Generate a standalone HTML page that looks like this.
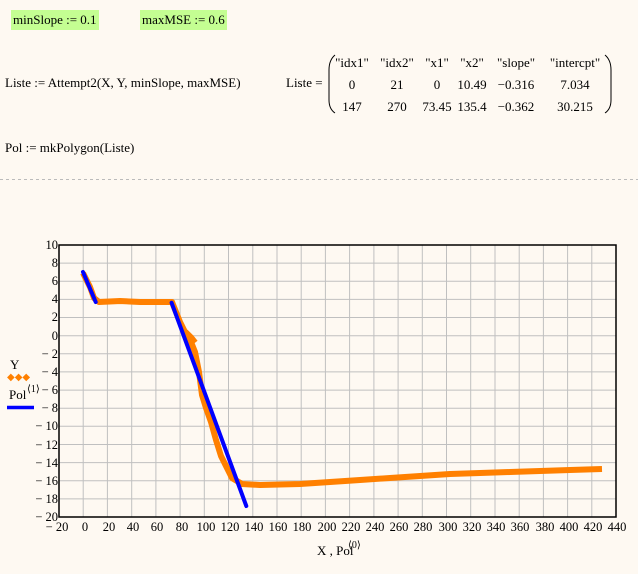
<!DOCTYPE html><html><head><meta charset="utf-8"><style>
body{margin:0;width:638px;height:574px;background:#fef9f2;font-family:"Liberation Serif",serif;font-size:13px;color:#000;position:relative;overflow:hidden}
.a{position:absolute;white-space:nowrap}
.g{background:#c4fe92;padding:2px 2px}
svg{position:absolute;left:0;top:0}
</style></head><body>
<div class="a g" style="left:11px;top:10px">minSlope := 0.1</div>
<div class="a g" style="left:140px;top:10px">maxMSE := 0.6</div>
<div class="a" style="left:5px;top:75px">Liste := Attempt2(X, Y, minSlope, maxMSE)</div>
<div class="a" style="left:286px;top:75px">Liste =</div>
<div class="a" style="left:5px;top:140px">Pol := mkPolygon(Liste)</div>
<svg width="638" height="574" font-family="Liberation Serif" font-size="12.5">
<g text-anchor="middle" font-size="13">
<text x="352" y="67">"idx1"</text><text x="397" y="67">"idx2"</text><text x="437" y="67">"x1"</text><text x="472" y="67">"x2"</text><text x="516" y="67">"slope"</text><text x="575" y="67">"intercpt"</text>
<text x="352" y="89">0</text><text x="397" y="89">21</text><text x="437" y="89">0</text><text x="472" y="89">10.49</text><text x="516" y="89">−0.316</text><text x="575" y="89">7.034</text>
<text x="352" y="111">147</text><text x="397" y="111">270</text><text x="437" y="111">73.45</text><text x="472" y="111">135.4</text><text x="516" y="111">−0.362</text><text x="575" y="111">30.215</text>
</g>
<path d="M335 55 Q329 60 329 70 L329 100 Q329 109 335 113" fill="none" stroke="#000"/>
<path d="M605 55 Q611 60 611 70 L611 100 Q611 109 605 113" fill="none" stroke="#000"/>
<line x1="0" y1="179.5" x2="638" y2="179.5" stroke="#bbb" stroke-dasharray="3,3"/>
<g stroke="#c0c0c0" stroke-width="1">
<path d="M83.2 245V517M107.4 245V517M131.7 245V517M155.9 245V517M180.1 245V517M204.3 245V517M228.5 245V517M252.8 245V517M277 245V517M301.2 245V517M325.4 245V517M349.6 245V517M373.9 245V517M398.1 245V517M422.3 245V517M446.5 245V517M470.7 245V517M495 245V517M519.2 245V517M543.4 245V517M567.6 245V517M591.8 245V517"/>
<path d="M59 263.1H616M59 281.3H616M59 299.4H616M59 317.5H616M59 335.7H616M59 353.8H616M59 371.9H616M59 390.1H616M59 408.2H616M59 426.3H616M59 444.5H616M59 462.6H616M59 480.7H616M59 498.9H616"/>
</g>
<rect x="59" y="245" width="557" height="272" fill="none" stroke="#000" stroke-width="1.5"/>
<g fill="none" stroke="#ff8000" stroke-width="6" stroke-linejoin="round">
<polyline points="83,273 90,287 94,298 99,302 120,301 140,302 172,302 180,322 186,334 191,342 195,352 199,372 202,395 206,408 211,422 216,440 221,456 226,466 232,478 242,484 260,485 300,484 330,482 360,480 390,478 420,476 450,474 480,473 510,472 540,471 570,470 602,469"/>
</g>
<g fill="none" stroke="#ff8000" stroke-width="4">
<polyline points="186,331 192,337 196,342"/>
</g>
<g stroke="#0000ff" stroke-width="4" stroke-linecap="round">
<line x1="83" y1="272" x2="95.7" y2="302"/><line x1="171.6" y1="302.8" x2="246.3" y2="506"/>
</g>
<g text-anchor="end">
<text x="58" y="249">10</text><text x="58" y="267">8</text><text x="58" y="285">6</text><text x="58" y="303">4</text><text x="58" y="321">2</text><text x="58" y="340">0</text><text x="58" y="358">− 2</text><text x="58" y="376">− 4</text><text x="58" y="394">− 6</text><text x="58" y="412">− 8</text><text x="58" y="430">− 10</text><text x="58" y="449">− 12</text><text x="58" y="467">− 14</text><text x="58" y="485">− 16</text><text x="58" y="503">− 18</text><text x="58" y="521">− 20</text>
</g>
<g text-anchor="middle">
<text x="57" y="531">− 20</text><text x="85" y="531">0</text><text x="109" y="531">20</text><text x="133" y="531">40</text><text x="157" y="531">60</text><text x="182" y="531">80</text><text x="206" y="531">100</text><text x="230" y="531">120</text><text x="254" y="531">140</text><text x="278" y="531">160</text><text x="302" y="531">180</text><text x="327" y="531">200</text><text x="351" y="531">220</text><text x="375" y="531">240</text><text x="399" y="531">260</text><text x="423" y="531">280</text><text x="448" y="531">300</text><text x="472" y="531">320</text><text x="496" y="531">340</text><text x="520" y="531">360</text><text x="545" y="531">380</text><text x="569" y="531">400</text><text x="593" y="531">420</text><text x="617" y="531">440</text>
</g>
<text x="317" y="555" font-size="13">X , Pol</text><text x="348" y="548" font-size="10">⟨0⟩</text>
<text x="10" y="369" font-size="13">Y</text>
<text x="7" y="380" font-size="10" fill="#ff8000">◆◆◆</text>
<text x="9" y="399" font-size="13">Pol</text><text x="27" y="392" font-size="10">⟨1⟩</text>
<line x1="7" y1="407.5" x2="34" y2="407.5" stroke="#0000ff" stroke-width="3.5"/>
</svg>
</body></html>
